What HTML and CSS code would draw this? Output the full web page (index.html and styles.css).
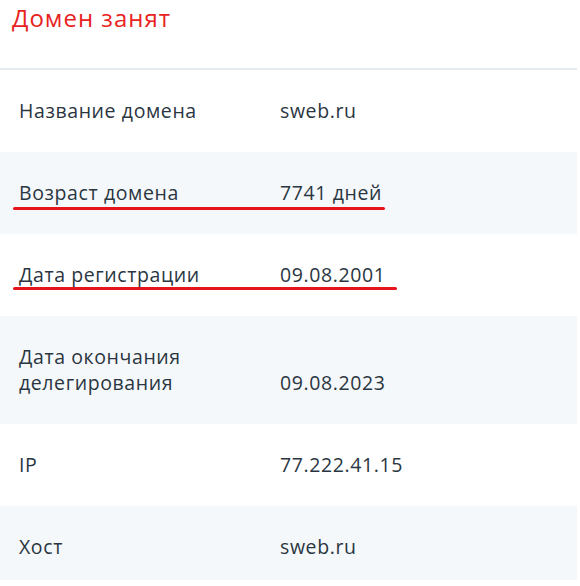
FILE: index.html
```html
<!DOCTYPE html>
<html lang="ru">
<head>
<meta charset="utf-8">
<link rel="stylesheet" href="styles.css">
</head>
<body>
<div class="panel">
  <div class="header">
    <h2 class="title">Домен занят</h2>
  </div>
  <div class="table">
    <div class="row">
      <div class="label">Название домена</div>
      <div class="value">sweb.ru</div>
    </div>
    <div class="row alt">
      <div class="label">Возраст домена</div>
      <div class="value">7741 дней</div>
      <span class="mark mark-age"></span>
    </div>
    <div class="row">
      <div class="label">Дата регистрации</div>
      <div class="value">09.08.2001</div>
      <span class="mark mark-reg"></span>
    </div>
    <div class="row alt">
      <div class="label">Дата окончания<br>делегирования</div>
      <div class="value">09.08.2023</div>
    </div>
    <div class="row">
      <div class="label">IP</div>
      <div class="value">77.222.41.15</div>
    </div>
    <div class="row alt last">
      <div class="label">Хост</div>
      <div class="value">sweb.ru</div>
    </div>
  </div>
</div>
</body>
</html>
```

FILE: styles.css
```css
html, body {
  margin: 0;
  padding: 0;
  background: #ffffff;
}

body {
  font-family: "Open Sans", Lato, sans-serif;
  color: #2a3641;
}

.panel {
  width: 577px;
}

.header {
  height: 68px;
  border-bottom: 2px solid #e5ebee;
  padding-left: 12px;
}

.title {
  margin: 0;
  padding-top: 2px;
  font-size: 24px;
  font-weight: 400;
  letter-spacing: 1px;
  line-height: 32px;
  color: #e8221d;
}

.table {
  display: flex;
  flex-direction: column;
}

.row {
  position: relative;
  display: grid;
  grid-template-columns: 261px 1fr;
  align-items: last baseline;
  padding: 28px 19px 28px;
  font-size: 19.5px;
  letter-spacing: 0.6px;
  line-height: 25px;
}

.row.alt {
  background: #f5f8fa;
}

.row.last {
  padding-bottom: 20px;
}

.label {
  line-height: 26px;
}

.mark {
  position: absolute;
  left: 13px;
  height: 3px;
  border-radius: 2px;
  background: #e6151b;
}

.mark-age {
  top: 55px;
  width: 372px;
}

.mark-reg {
  top: 53px;
  width: 384px;
}
```
